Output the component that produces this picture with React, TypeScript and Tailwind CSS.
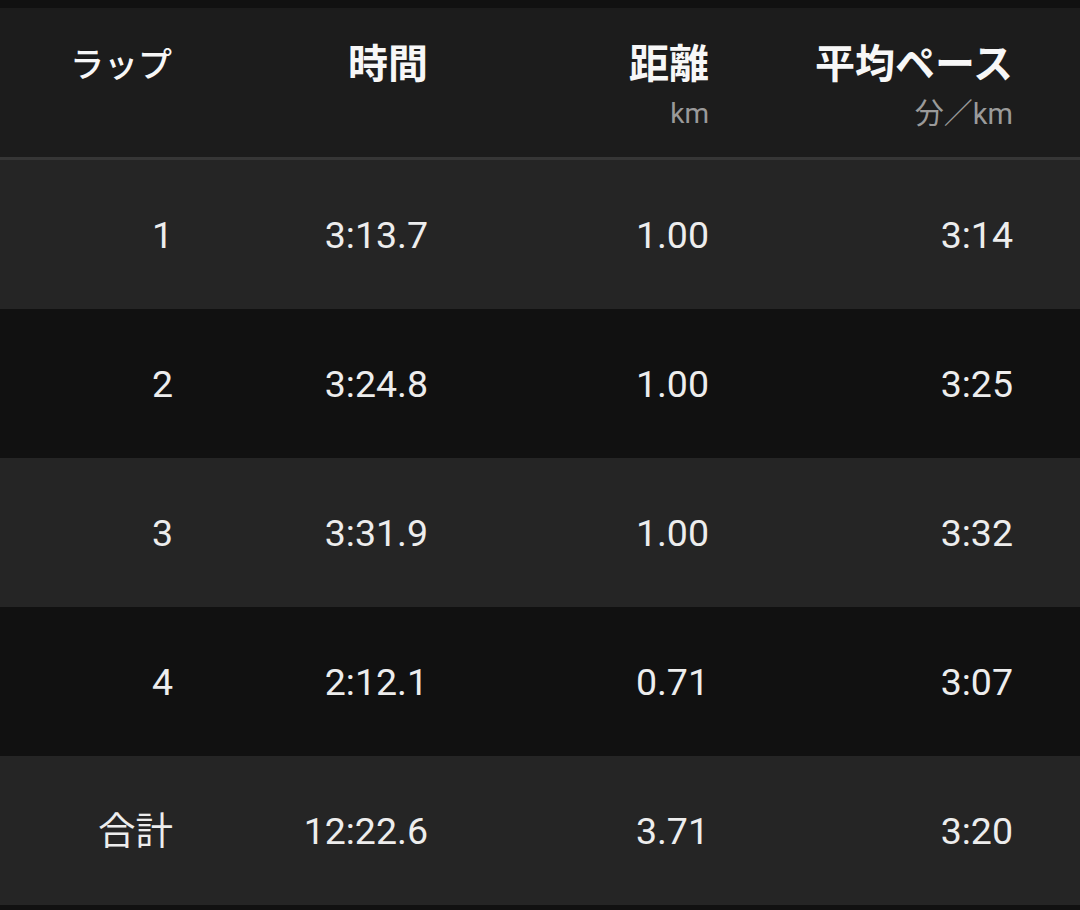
import React from "react";

const rows = [
  { lap: "1", time: "3:13.7", dist: "1.00", pace: "3:14" },
  { lap: "2", time: "3:24.8", dist: "1.00", pace: "3:25" },
  { lap: "3", time: "3:31.9", dist: "1.00", pace: "3:32" },
  { lap: "4", time: "2:12.1", dist: "0.71", pace: "3:07" },
];

const font = { fontFamily: 'Roboto, "Noto Sans CJK JP", sans-serif' };

function Row({
  lap,
  time,
  dist,
  pace,
  dark,
}: {
  lap: string;
  time: string;
  dist: string;
  pace: string;
  dark: boolean;
}) {
  return (
    <div
      className={`flex h-[149px] items-center text-[37.5px] leading-[38px] text-[#ededed] ${
        dark ? "bg-[#111111]" : "bg-[#252525]"
      }`}
    >
      <div className="w-[173px] text-right">{lap}</div>
      <div className="w-[255px] text-right">{time}</div>
      <div className="w-[281px] text-right">{dist}</div>
      <div className="w-[304px] text-right">{pace}</div>
    </div>
  );
}

export default function App() {
  return (
    <div
      className="flex h-[910px] w-[1080px] flex-col overflow-hidden bg-[#111111] pt-[8px]"
      style={font}
    >
      <div className="flex h-[149px] items-start bg-[#1c1c1c] pt-[37px]">
        <div className="w-[173px] pr-[1px] text-right text-[34px] font-medium leading-[40px] text-[#f7f7f7]">
          ラップ
        </div>
        <div className="w-[255px] text-right text-[40px] font-bold leading-[40px] text-[#f7f7f7]">
          時間
        </div>
        <div className="flex w-[281px] flex-col items-end">
          <div className="text-[40px] font-bold leading-[40px] text-[#f7f7f7]">距離</div>
          <div className="mt-[15px] text-[28px] leading-[28px] text-[#9a9a9a]">km</div>
        </div>
        <div className="flex w-[304px] flex-col items-end">
          <div className="text-[40px] font-bold leading-[40px] text-[#f7f7f7]">
            平均ペース
          </div>
          <div className="mt-[15px] text-[29px] leading-[28px] text-[#9a9a9a]">分／km</div>
        </div>
      </div>
      <div className="h-[3px] bg-[#363636]" />
      {rows.map((r, i) => (
        <Row key={r.lap} {...r} dark={i % 2 === 1} />
      ))}
      <div className="flex h-[149px] items-center bg-[#252525] text-[37.5px] leading-[38px] text-[#ededed]">
        <div className="w-[173px] text-right">合計</div>
        <div className="w-[255px] text-right">12:22.6</div>
        <div className="w-[281px] text-right">3.71</div>
        <div className="w-[304px] text-right">3:20</div>
      </div>
    </div>
  );
}
